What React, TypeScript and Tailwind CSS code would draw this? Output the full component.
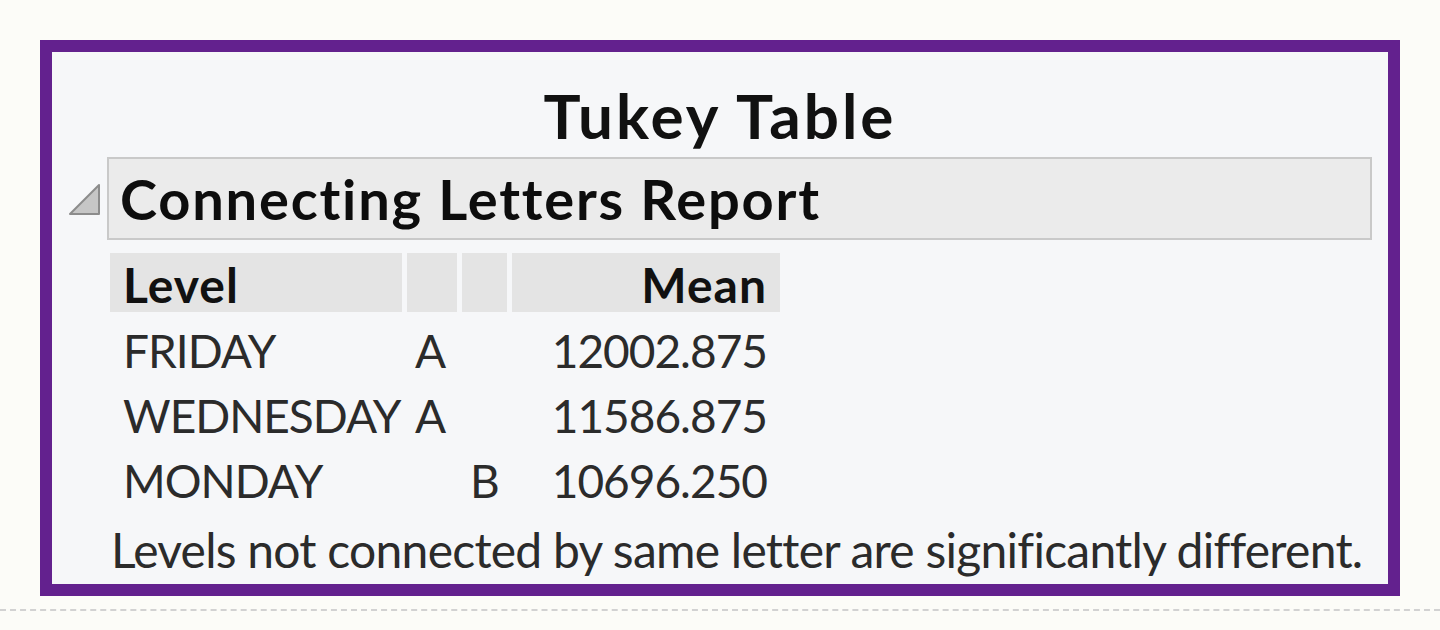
export default function App() {
  const rows = [
    { level: 'FRIDAY', a: 'A', b: '', mean: '12002.875' },
    { level: 'WEDNESDAY', a: 'A', b: '', mean: '11586.875' },
    { level: 'MONDAY', a: '', b: 'B', mean: '10696.250' },
  ]

  return (
    <div className="w-[1440px] h-[630px] bg-[#fcfcf8] pt-[40px] font-['Lato',sans-serif] [font-variant-ligatures:none] overflow-hidden">
      {/* Report frame */}
      <div className="ml-[40px] w-[1360px] h-[556px] border-[12px] border-[#63218e] bg-[#f6f7f9] pl-[16px] pr-[16px]">
        <div className="h-[32px]" />
        <h1 className="text-center text-[62px] leading-none font-bold tracking-[3px] text-[#111] h-[73px]">Tukey Table</h1>

        {/* Outline header */}
        <div className="flex items-center gap-[5px]">
          <svg width="34" height="34" viewBox="0 0 34 34" className="shrink-0">
            <path d="M31 3 L31 32 L2 32 Z" fill="#c6c6c6" stroke="#8c8c8c" strokeWidth="2" strokeLinejoin="round" />
          </svg>
          <div className="flex-1 h-[83px] bg-[#ebebeb] border-2 border-[#c9c9c9] flex items-center pl-[11px]">
            <span className="text-[56px] leading-none font-bold tracking-[1.8px] text-[#0d0d0d]">Connecting Letters Report</span>
          </div>
        </div>

        {/* Table */}
        <div className="ml-[42px] mt-[13px]">
          <div className="flex gap-[5px] h-[59px] text-[48px] font-bold tracking-[1px] text-[#111] leading-[59px]">
            <div className="w-[292px] bg-[#e4e4e4] pl-[13px] pt-[2px]">Level</div>
            <div className="w-[50px] bg-[#e4e4e4]" />
            <div className="w-[45px] bg-[#e4e4e4]" />
            <div className="w-[268px] bg-[#e4e4e4] pr-[13px] pt-[2px] text-right">Mean</div>
          </div>
          <div className="mt-[5px] text-[46px] tracking-[-1px] text-[#2b2b2b]">
            {rows.map((r) => (
              <div key={r.level} className="flex gap-[5px] h-[65px] leading-[65px] pt-[1px]">
                <div className="w-[292px] pl-[13px] whitespace-nowrap">{r.level}</div>
                <div className="w-[50px] pl-[8px]">{r.a}</div>
                <div className="w-[45px] pl-[8px]">{r.b}</div>
                <div className="w-[268px] pr-[13px] text-right">{r.mean}</div>
              </div>
            ))}
          </div>
          <p className="ml-[1px] mt-[5px] text-[48px] tracking-[-0.75px] leading-[65px] text-[#2b2b2b] whitespace-nowrap">
            Levels not connected by same letter are significantly different.
          </p>
        </div>
      </div>

      {/* Dashed divider */}
      <div className="mt-[13px] border-t-2 border-dashed border-[#d2d2d2]" />
    </div>
  )
}
